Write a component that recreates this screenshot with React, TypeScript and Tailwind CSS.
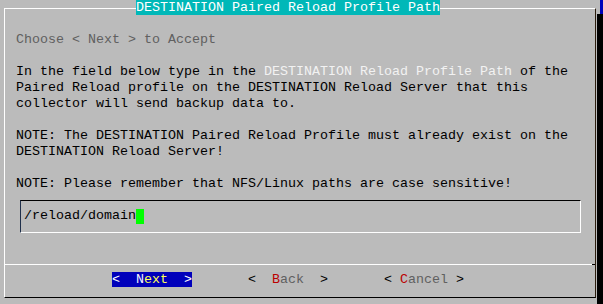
import React from 'react';

const Row: React.FC<{ children?: React.ReactNode; className?: string }> = ({ children, className = '' }) => (
  <div className={`h-4 ${className}`}>{children}</div>
);

const App: React.FC = () => {
  return (
    <div className="w-[603px] h-[304px] bg-[#bbbbbb] flex overflow-hidden font-['Liberation_Mono',monospace] text-[13.333px] leading-[16px] whitespace-pre text-black">
      <div className="w-[597px] pt-[8px] pl-[4px]">
        <div className="w-[592px] h-[290px] flex flex-col border-t border-l border-r border-b border-t-white border-l-white border-r-[#2b1d0e] border-b-black">
          <div className="-mt-[9px] ml-[131px] w-[304px] h-[15px] mb-[1px] bg-[#00b8b8] text-white">
            DESTINATION Paired Reload Profile Path
          </div>

          <div className="pl-[11px] mt-4">
            <Row className="text-[#606060]">Choose &lt; Next &gt; to Accept</Row>
            <Row className="mt-4">
              In the field below type in the <span className="text-[#f2f2f2]">DESTINATION Reload Profile Path</span> of the
            </Row>
            <Row>Paired Reload profile on the DESTINATION Reload Server that this</Row>
            <Row>collector will send backup data to.</Row>
            <Row className="mt-4">NOTE: The DESTINATION Paired Reload Profile must already exist on the</Row>
            <Row>DESTINATION Reload Server!</Row>
            <Row className="mt-4">NOTE: Please remember that NFS/Linux paths are case sensitive!</Row>
          </div>

          <div className="mt-[8px] ml-[15px] w-[561px] h-[33px] pl-[3px] pt-[7px] border-t border-l border-r border-b border-t-black border-l-[#1f2f4a] border-r-white border-b-white">
            <div className="h-4 flex">
              <span>/reload/domain</span>
              <span className="w-[8px] h-[15px] mt-[1px] bg-[#00ff00]" />
            </div>
          </div>

          <div className="mt-[31px] h-px flex">
            <div className="flex-1 bg-white" />
            <div className="w-[3px] bg-black" />
          </div>

          <Row className="mt-[7px] pl-[11px]">
            {'            '}
            <span className="bg-[#0000bb] text-white">
              {'<  '}
              <span className="text-[#f0f0ff]">N</span>
              <span className="text-[#ffff55]">ext</span>
              {'  >'}
            </span>
            {'       '}
            <span>
              {'<  '}
              <span className="text-[#bb0000]">B</span>
              <span className="text-[#606060]">ack</span>
              {'  >'}
            </span>
            {'       '}
            <span>
              {'< '}
              <span className="text-[#bb0000]">C</span>
              <span className="text-[#606060]">ancel</span>
              {' >'}
            </span>
          </Row>
        </div>
      </div>

      <div className="flex-1 flex flex-col">
        <div className="h-[14px] flex">
          <div className="w-[3px]" />
          <div className="flex-1 bg-[#0000bb]" />
        </div>
        <div className="flex-1 bg-black" />
      </div>
    </div>
  );
};

export default App;
